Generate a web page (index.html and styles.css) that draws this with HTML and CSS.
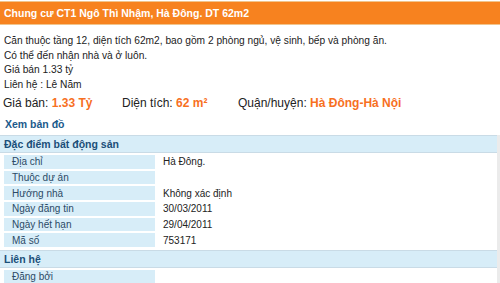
FILE: index.html
```html
<!DOCTYPE html>
<html lang="vi">
  <head>
    <meta charset="UTF-8">
    <title>Chung cư CT1 Ngô Thì Nhậm, Hà Đông</title>
    <link rel="stylesheet" href="styles.css">
  </head>
  <body>
    <div class="listing">
      <h1 class="listing-title">Chung cư CT1 Ngô Thì Nhậm, Hà Đông. DT 62m2</h1>

      <div class="listing-desc">
        <p>Căn thuộc tầng 12, diện tích 62m2, bao gồm 2 phòng ngủ, vệ sinh, bếp và phòng ăn.</p>
        <p>Có thể đến nhận nhà và ở luôn.</p>
        <p>Giá bán 1.33 tỷ</p>
        <p>Liên hệ : Lê Năm</p>
      </div>

      <div class="price-row">
        <span class="price-item price">Giá bán: <b>1.33 Tỷ</b></span>
        <span class="price-item area">Diện tích: <b>62 m²</b></span>
        <span class="price-item district">Quận/huyện: <b>Hà Đông-Hà Nội</b></span>
      </div>

      <a class="map-link" href="#">Xem bản đồ</a>

      <div class="details">
        <h2 class="section-head">Đặc điểm bất động sản</h2>
        <table class="info">
          <tr><td class="label">Địa chỉ</td><td class="value">Hà Đông.</td></tr>
          <tr><td class="label">Thuộc dự án</td><td class="value"></td></tr>
          <tr><td class="label">Hướng nhà</td><td class="value">Không xác định</td></tr>
          <tr><td class="label">Ngày đăng tin</td><td class="value">30/03/2011</td></tr>
          <tr><td class="label">Ngày hết hạn</td><td class="value">29/04/2011</td></tr>
          <tr><td class="label">Mã số</td><td class="value">753171</td></tr>
        </table>

        <h2 class="section-head">Liên hệ</h2>
        <table class="info">
          <tr><td class="label">Đăng bởi</td><td class="value"></td></tr>
        </table>
      </div>
    </div>
  </body>
</html>
```

FILE: styles.css
```css
/* Page */
body {
    margin: 0;
    background: #fff;
    color: #222;
    font-family: "Liberation Sans", Arial, sans-serif;
    font-size: 10px;
}

.listing {
    padding-top: 1px;
}

/* Orange title bar */
.listing-title {
    margin: 0;
    height: 22px;
    line-height: 22px;
    padding: 0 4px;
    background: #f7821f;
    border-top: 1px solid #f1c48c;
    border-bottom: 1px solid #f1c48c;
    color: #fff;
    font-size: 10.5px;
    font-weight: bold;
}

/* Description */
.listing-desc {
    padding: 9px 4px 0;
    font-size: 10.2px;
}

.listing-desc p {
    margin: 0;
    line-height: 14.5px;
}

/* Price / area / district */
.price-row {
    display: flex;
    padding: 3px 3px 0;
    font-size: 12px;
    line-height: 17px;
}

.price-row b {
    color: #f7701f;
}

.price-item.price { width: 119px; }
.price-item.area { width: 116px; }

/* Map link */
.map-link {
    display: block;
    padding: 5px 5px 0;
    color: #1b5a8c;
    font-weight: bold;
    font-size: 10.5px;
    text-decoration: none;
    line-height: 15px;
}

/* Details block */
.details {
    margin-top: 3px;
    border-right: 3px solid #ebebeb;
}

.section-head {
    margin: 0;
    height: 16px;
    line-height: 16px;
    padding: 0 4px;
    background: #d7edf8;
    border-top: 1px solid #c9dbe6;
    border-bottom: 1px solid #c9dbe6;
    color: #1b4f78;
    font-size: 10.5px;
    font-weight: bold;
}

.info {
    border-collapse: separate;
    border-spacing: 4px 2px;
    margin: 0 0 1px 0;
}

.info td {
    height: 13.7px;
    padding: 0;
    line-height: 13px;
    font-size: 10px;
    vertical-align: middle;
}

.label {
    width: 143px;
    padding-left: 8px !important;
    background: #d7edf8;
    color: #2b4a66;
}

.value {
    padding-left: 4px !important;
    color: #222;
}
```
